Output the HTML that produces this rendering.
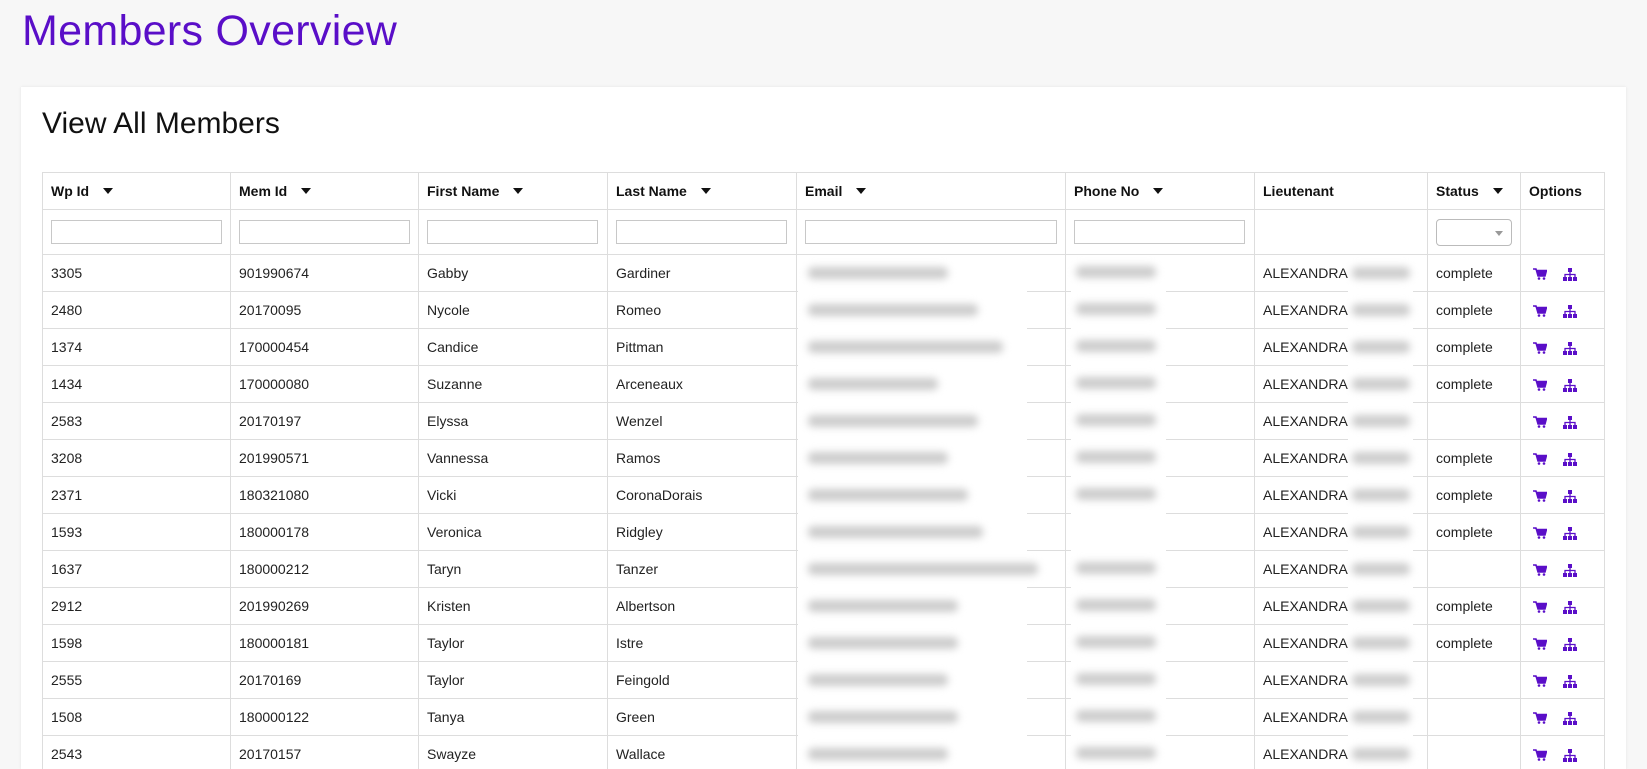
<!DOCTYPE html>
<html style="height:769px;overflow:hidden"><head><meta charset="utf-8"><style>
*{box-sizing:border-box}
body{margin:0;width:1647px;height:769px;overflow:hidden;background:#f7f7f7;font-family:"Liberation Sans",sans-serif;color:#222;position:relative}
h1{position:absolute;left:22px;top:7px;margin:0;font-weight:normal;font-size:43px;color:#5a0ec8;letter-spacing:0.3px}
.card{position:absolute;left:21px;top:87px;width:1605px;height:682px;background:#fff;box-shadow:0 0 3px rgba(0,0,0,.08)}
h2{position:absolute;left:42px;top:107px;margin:0;font-weight:normal;font-size:30px;color:#111}
.wrap{position:absolute;left:0;top:0;width:1647px;height:769px;overflow:hidden}
table{position:absolute;left:42px;top:172px;border-collapse:collapse;table-layout:fixed;width:1562px;font-size:14px}
td,th{border:1px solid #ddd;padding:0 0 0 8px;text-align:left;white-space:nowrap;overflow:hidden}
th{height:37px;font-weight:bold;color:#111}
tr.f td{height:45px}
tbody td{height:37px;color:#222}
.ar{display:inline-block;width:0;height:0;border-left:5px solid transparent;border-right:5px solid transparent;border-top:6px solid #111;margin-left:14px;vertical-align:2px}
.in{display:block;width:171px;height:24px;border:1px solid #c8c8c8}
.sel{width:76px;height:27px;border:1px solid #bbb;border-radius:4px;position:relative}
.sel:after{content:"";position:absolute;right:8px;top:11px;border-left:4px solid transparent;border-right:4px solid transparent;border-top:5px solid #999}
.blur{position:absolute;background:#fff}
.bar{position:absolute;height:12px;background:#ccc;filter:blur(4px);border-radius:5px}
.ic{display:inline-block;vertical-align:middle}
</style></head><body>
<div class="wrap">
<h1>Members Overview</h1>
<div class="card"></div>
<h2>View All Members</h2>
<table>
<colgroup><col style="width:188px"><col style="width:188px"><col style="width:189px"><col style="width:189px"><col style="width:269px"><col style="width:189px"><col style="width:173px"><col style="width:93px"><col style="width:84px"></colgroup>
<thead><tr><th>Wp Id<span class="ar"></span></th><th>Mem Id<span class="ar"></span></th><th>First Name<span class="ar"></span></th><th>Last Name<span class="ar"></span></th><th>Email<span class="ar"></span></th><th>Phone No<span class="ar"></span></th><th>Lieutenant</th><th>Status<span class="ar"></span></th><th>Options</th></tr>
<tr class="f"><td><span class="in"></span></td><td><span class="in"></span></td><td><span class="in"></span></td><td><span class="in"></span></td><td><span class="in" style="width:252px"></span></td><td><span class="in"></span></td><td></td><td><div class="sel"></div></td><td></td></tr></thead>
<tbody id="tb"></tbody></table>
<div id="ov"></div>
</div>
<script>
var d=[["3305","901990674","Gabby","Gardiner",1],["2480","20170095","Nycole","Romeo",1],["1374","170000454","Candice","Pittman",1],["1434","170000080","Suzanne","Arceneaux",1],["2583","20170197","Elyssa","Wenzel",0],["3208","201990571","Vannessa","Ramos",1],["2371","180321080","Vicki","CoronaDorais",1],["1593","180000178","Veronica","Ridgley",1],["1637","180000212","Taryn","Tanzer",0],["2912","201990269","Kristen","Albertson",1],["1598","180000181","Taylor","Istre",1],["2555","20170169","Taylor","Feingold",0],["1508","180000122","Tanya","Green",0],["2543","20170157","Swayze","Wallace",0]];
var cart='<svg class="ic" width="14" height="12" viewBox="0 0 14 12"><path d="M0 1h3l2 7h7l1.5-5.5H4" fill="#5a0ec8" stroke="#5a0ec8" stroke-width="1.5"/><circle cx="6" cy="10.5" r="1.3" fill="#5a0ec8"/><circle cx="11" cy="10.5" r="1.3" fill="#5a0ec8"/></svg>';
var tree='<svg class="ic" width="14" height="13" viewBox="0 0 14 13" style="margin-left:16px"><rect x="5" y="0" width="4" height="4" fill="#5a0ec8"/><path d="M7 4v2.5M2 9V6.5h10V9M7 6.5V9" stroke="#5a0ec8" stroke-width="1.3" fill="none"/><rect x="0" y="9" width="4" height="4" fill="#5a0ec8"/><rect x="5" y="9" width="4" height="4" fill="#5a0ec8"/><rect x="10" y="9" width="4" height="4" fill="#5a0ec8"/></svg>';
var h='';d.forEach(function(r){h+='<tr><td>'+r[0]+'</td><td>'+r[1]+'</td><td>'+r[2]+'</td><td>'+r[3]+'</td><td></td><td></td><td>ALEXANDRA I</td><td>'+(r[4]?'complete':'')+'</td><td style="padding-left:12px">'+cart+tree+'</td></tr>'});
document.getElementById('tb').innerHTML=h;
var o='<div class="blur" style="left:798px;top:283px;width:229px;height:486px"></div><div class="blur" style="left:1071px;top:258px;width:95px;height:511px"></div><div class="blur" style="left:1348px;top:256px;width:65px;height:513px"></div>';
var ew=[140,170,195,130,170,140,160,175,230,150,150,140,150,140];
for(var i=0;i<14;i++){var y=267+i*37;o+='<div class="bar" style="left:808px;top:'+y+'px;width:'+ew[i]+'px"></div>';if(i!=7)o+='<div class="bar" style="left:1076px;top:'+(y-1)+'px;width:80px"></div>';o+='<div class="bar" style="left:1352px;top:'+y+'px;width:58px"></div>';}
document.getElementById('ov').innerHTML=o;
</script>
</body></html>
